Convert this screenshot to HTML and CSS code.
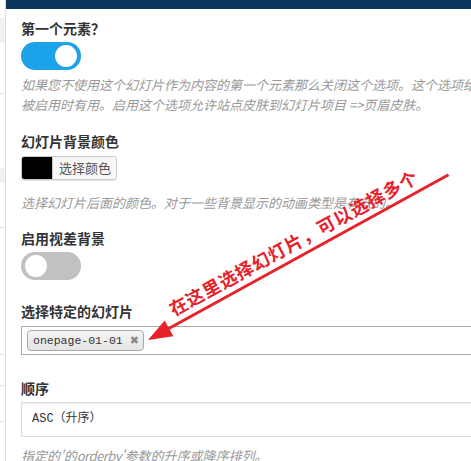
FILE: index.html
```html
<!DOCTYPE html>
<html lang="zh-CN">
<head>
    <meta charset="UTF-8">
    <meta name="viewport" content="width=device-width, initial-scale=1.0">
    <title>幻灯片设置</title>
    <link rel="stylesheet" href="styles.css">
</head>
<body>
    <div class="page">
        <div class="sidebar">
            <div class="side-gap" style="height: 18px"></div>
            <div class="side-band" style="height: 25px"></div>
            <div class="side-row" style="height: 50px"></div>
            <div class="side-gap" style="height: 74px"></div>
            <div class="side-band" style="height: 15px"></div>
            <div class="side-row" style="height: 44px"></div>
            <div class="side-row" style="height: 126px"></div>
            <div class="side-row" style="height: 30px"></div>
            <div class="side-row" style="height: 35px"></div>
        </div>

        <div class="panel">
            <div class="topbar"></div>
            <div class="content">
                <div class="field field-first">
                    <div class="label">第一个元素？</div>
                    <div class="toggle on"><span class="knob"></span></div>
                    <p class="desc desc-first">如果您不使用这个幻灯片作为内容的第一个元素那么关闭这个选项。这个选项给页眉皮肤被启用时有用。启用这个选项允许站点皮肤到幻灯片项目 =&gt;页眉皮肤。</p>
                </div>

                <div class="field field-color">
                    <div class="label">幻灯片背景颜色</div>
                    <div class="color-picker">
                        <span class="swatch"></span>
                        <span class="pick-btn">选择颜色</span>
                    </div>
                    <p class="desc desc-color">选择幻灯片后面的颜色。对于一些背景显示的动画类型是有效的。</p>
                </div>

                <div class="field field-parallax">
                    <div class="label">启用视差背景</div>
                    <div class="toggle"><span class="knob"></span></div>
                </div>

                <div class="field field-slides">
                    <div class="label">选择特定的幻灯片</div>
                    <div class="multi-select">
                        <span class="chip">onepage-01-01<span class="chip-x">✖</span></span>
                    </div>
                </div>

                <div class="field field-order">
                    <div class="label">顺序</div>
                    <div class="single-select">ASC（升序）</div>
                    <p class="desc desc-order">指定的'的<span class="latin">orderby</span>'参数的升序或降序排列。</p>
                </div>
            </div>
        </div>
    </div>

    <svg class="annotation" width="471" height="461" viewBox="0 0 471 461">
        <g transform="translate(148 340) rotate(-28.8)">
            <line x1="16" y1="0" x2="343" y2="0" stroke="#e8222b" stroke-width="3"/>
            <polygon points="0,0 24,-9 24,9" fill="#e8222b"/>
            <text x="34" y="-8" class="annotation-text" textLength="280" lengthAdjust="spacing">在这里选择幻灯片，可以选择多个</text>
        </g>
    </svg>
</body>
</html>
```

FILE: styles.css
```css
body {
    margin: 0;
    background-color: #fff;
    font-family: "Noto Sans CJK SC", "Noto Sans", sans-serif;
    color: #333;
    overflow: hidden;
    height: 461px;
    position: relative;
}
.page {
    display: flex;
    align-items: flex-start;
}
.sidebar {
    width: 5px;
    min-height: 461px;
    border-right: 1px solid #dcdcdc;
    display: flex;
    flex-direction: column;
    flex-shrink: 0;
}
.side-band {
    background-color: #f1f1f1;
}
.side-row {
    border-bottom: 1px solid #e2e2e2;
}
.panel {
    width: 540px;
    flex-shrink: 0;
}
.topbar {
    height: 9px;
    background-color: #0b355a;
}
.content {
    padding: 9px 0 0 15px;
}
.label {
    font-size: 14px;
    font-weight: bold;
    line-height: 20px;
    color: #333;
}
.desc {
    margin: 0;
    font-size: 13px;
    line-height: 20px;
    font-style: italic;
    color: #999;
    width: 510px;
}
.desc .latin {
    letter-spacing: -0.5px;
}

/* spacing between the fields */
.field-first {
    margin-bottom: 16px;
}
.field-first .toggle {
    margin-top: 4px;
}
.desc-first {
    margin-top: 5px;
}
.field-color {
    margin-bottom: 15px;
}
.field-color .color-picker {
    margin-top: 5px;
}
.desc-color {
    margin-top: 13px;
}
.field-parallax {
    margin-bottom: 21px;
}
.field-parallax .toggle {
    margin-top: 4px;
}
.field-slides {
    margin-bottom: 23px;
}
.field-slides .multi-select {
    margin-top: 5px;
}
.field-order .single-select {
    margin-top: 4px;
}
.desc-order {
    margin-top: 9px;
}

/* toggle switch */
.toggle {
    width: 60px;
    height: 28px;
    border-radius: 14px;
    background-color: #c1c1c1;
    position: relative;
}
.toggle.on {
    background-color: #1ca2e8;
}
.knob {
    position: absolute;
    top: 3px;
    left: 4px;
    width: 22px;
    height: 22px;
    border-radius: 50%;
    background-color: #fff;
}
.toggle.on .knob {
    left: auto;
    right: 4px;
}

/* colour picker */
.color-picker {
    display: flex;
    width: fit-content;
    height: 22px;
    border: 1px solid #c8c8c8;
    border-radius: 3px;
    overflow: hidden;
    box-shadow: 0 1px 0 #e6e6e6;
}
.swatch {
    width: 30px;
    background-color: #000;
}
.pick-btn {
    padding: 0 5px 0 6px;
    font-size: 13px;
    line-height: 22px;
    color: #555;
    background-color: #f7f7f7;
    border-left: 1px solid #c8c8c8;
}

/* select boxes */
.multi-select {
    display: flex;
    align-items: center;
    height: 29px;
    box-sizing: border-box;
    border: 1px solid #aaa;
    padding: 0 5px;
    background-color: #fff;
}
.chip {
    display: flex;
    align-items: center;
    height: 19px;
    padding: 0 4px 0 5px;
    border: 1px solid #aaa;
    border-radius: 4px;
    background: linear-gradient(#f4f4f4, #e4e4e4);
    font-family: "Liberation Mono", monospace;
    font-size: 11.5px;
    color: #333;
}
.chip-x {
    font-family: "DejaVu Sans", sans-serif;
    font-size: 11px;
    color: #888;
    margin-left: 7px;
}
.single-select {
    height: 35px;
    box-sizing: border-box;
    border: 1px solid #ddd;
    box-shadow: inset 0 1px 2px rgba(0, 0, 0, 0.07);
    padding-left: 10px;
    font-family: "Liberation Mono", "Noto Sans CJK SC", monospace;
    font-size: 12px;
    line-height: 33px;
    color: #333;
}

/* red hand-drawn note */
.annotation {
    position: absolute;
    top: 0;
    left: 0;
    pointer-events: none;
}
.annotation-text {
    font-family: "Noto Sans CJK SC", sans-serif;
    font-size: 18px;
    font-weight: bold;
    fill: #e8222b;
}
```
